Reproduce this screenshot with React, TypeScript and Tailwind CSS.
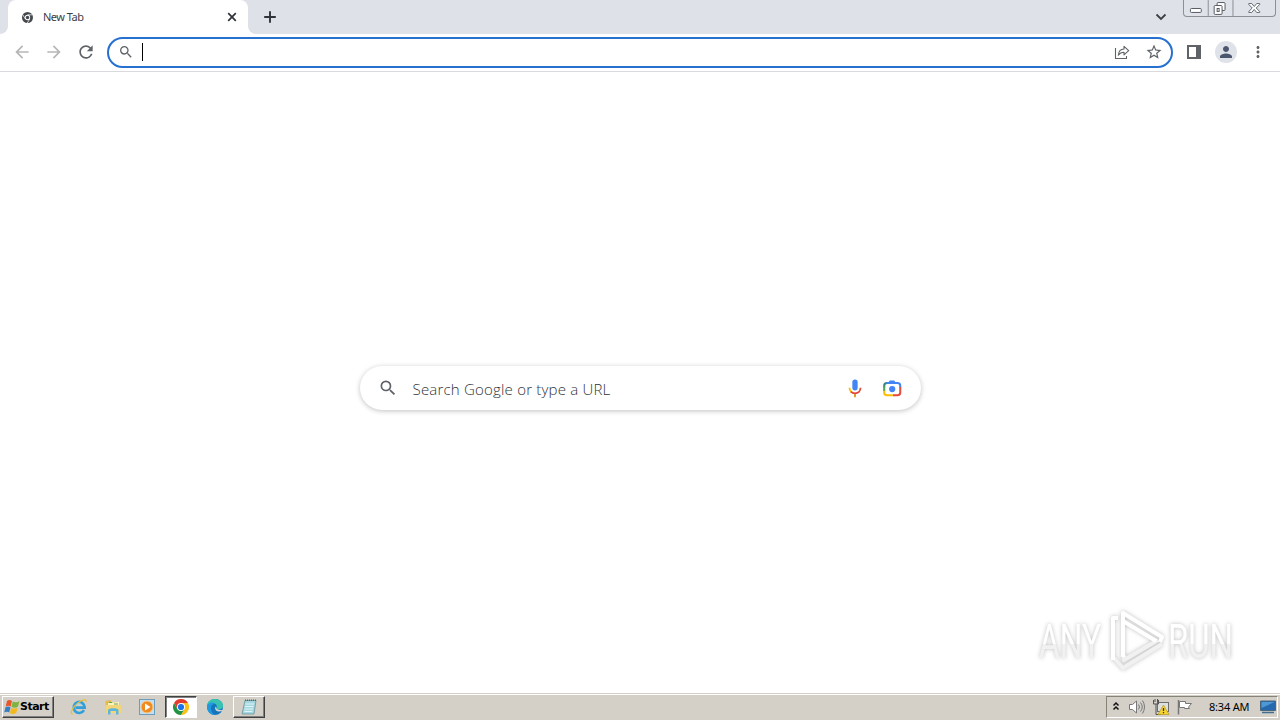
import type { ReactNode } from 'react';
import { MdArrowBack, MdArrowForward, MdMoreVert, MdPerson, MdRefresh, MdSearch, MdStarBorder } from 'react-icons/md';

function ChromeMono() {
    return (
        <svg viewBox="0 0 24 24" className="h-[11px] w-[11px]">
            <circle cx="12" cy="12" r="12" fill="#45494d" />
            <circle cx="12" cy="12" r="5.8" fill="#fff" />
            <circle cx="12" cy="12" r="3.8" fill="#45494d" />
            <path d="M12 6.2h11M7 15L1.5 5.5M17 15l-5.5 9" stroke="#fff" strokeWidth="1.6" />
        </svg>
    );
}

function ChromeLogo() {
    return (
        <svg viewBox="0 0 48 48" className="h-4 w-4">
            <path d="M24 12H44.8A24 24 0 0 1 24 48L34.4 30z" fill="#fbc116" />
            <path d="M13.6 30L3.2 12A24 24 0 0 0 24 48L34.4 30z" fill="#229342" />
            <path d="M3.2 12A24 24 0 0 1 44.8 12H24L13.6 30z" fill="#e33b2e" />
            <circle cx="24" cy="24" r="12" fill="#fff" />
            <circle cx="24" cy="24" r="9.3" fill="#1a73e8" />
        </svg>
    );
}

function CloseIcon() {
    return (
        <svg viewBox="0 0 14 14" className="h-[14px] w-[14px]" fill="none" stroke="#303438" strokeWidth="1.7">
            <path d="M3.200 3.200l7.600 7.600M10.800 3.200l-7.600 7.600" />
        </svg>
    );
}

function PlusIcon() {
    return (
        <svg viewBox="0 0 18 18" className="mt-2 ml-[5px] h-[18px] w-[18px]" fill="none" stroke="#303438" strokeWidth="1.9">
            <path d="M9 3.200v11.600M3.200 9h11.600" />
        </svg>
    );
}

function ShareIcon() {
    return (
        <svg viewBox="0 0 16 16" className="h-4 w-4" fill="none" stroke="#5f6368" strokeWidth="1.1">
            <path d="M1.5 4v10.500h11V12" />
            <path d="M4.3 11.2c.3-3.8 2.3-6 5.7-6.2V2.300L14.700 6.700 10 10.800V8.300c-2.600 0-4.300.8-5.700 2.900z" strokeLinejoin="round" />
        </svg>
    );
}

function MicIcon() {
    return (
        <svg viewBox="0 0 24 24" className="h-[22px] w-[22px]">
            <rect x="9.100" y="2.600" width="5.800" height="12" rx="2.900" fill="#4285f4" />
            <path d="M11 18h2v4h-2z" fill="#dc9b18" />
            <path d="M6 11.800c0 2 .7 3.500 1.900 4.600" fill="none" stroke="#fbbc05" strokeWidth="2" />
            <path d="M7.500 16C8.700 17.300 10.200 17.800 12 17.800c3.500 0 6-2.500 6-6" fill="none" stroke="#e3493a" strokeWidth="2" />
        </svg>
    );
}

function LensIcon() {
    return (
        <svg viewBox="0 0 24 24" className="h-[22px] w-[22px]" fill="none" strokeWidth="2.200">
            <path d="M3.500 11.500V9.500a3 3 0 0 1 3-3" stroke="#34857a" />
            <path d="M6 6.500h12a3 3 0 0 1 3 3v2" stroke="#4285f4" />
            <path d="M8 6l1.500-2.200h5L16 6z" fill="#4285f4" />
            <path d="M21 11v6a3 3 0 0 1-3 3h-5" stroke="#e34b3d" />
            <path d="M3.500 13v4a3 3 0 0 0 3 3H13" stroke="#fbbc05" />
            <path d="M3.500 10v5" stroke="#4ba761" />
            <circle cx="12.200" cy="13.200" r="3.400" fill="#4285f4" />
        </svg>
    );
}

function WindowsFlag() {
    return (
        <svg viewBox="0 0 16 16" className="h-4 w-4">
            <path d="M3 2C5 .5 6.500 1 8 2L6.700 7.500C5 6.300 3.300 6.500 1.700 7.500z" fill="#e8572c" />
            <path d="M8.800 2.500c2 1.200 4.500 1 6.700-.2l-1.600 5.500c-2 1.300-4.500 1.300-6.500 0z" fill="#7fb33f" />
            <path d="M1.500 8.300C3.200 7.200 5 7.300 6.500 8.300L5.200 13.500C3.700 12.500 2 12.500 .2 13.500z" fill="#347fc4" />
            <path d="M7.200 8.700c2 1.200 4.500 1.200 6.500 0l-1.500 5.300c-2 1.300-4.300 1.200-6.300 0z" fill="#f3b91c" />
        </svg>
    );
}

function ExplorerE() {
    return (
        <svg viewBox="0 0 18 18" className="h-[18px] w-[18px]" fill="none">
            <path d="M14 12.200A5.500 5.500 0 1 1 14.700 9.600H5.500" stroke="#319fd9" strokeWidth="2.700" />
            <path d="M2.800 15.800C-.5 16.500 2 9.500 8 5c4-3.200 8.500-4.500 8.200-1.200" stroke="#e8bd3c" strokeWidth="1.300" />
            <path d="M5.800 7.500c1.400-2.200 4.700-2.300 6-.3" stroke="#91d7f5" />
        </svg>
    );
}

function FolderIcon() {
    return (
        <svg viewBox="0 0 18 18" className="h-[18px] w-[18px]">
            <path d="M1.500 3l5-1 1 2 8 1v9h-14z" fill="#e2bb50" />
            <path d="M4 5l11-1v8H4z" fill="#fff3bd" />
            <path d="M1.500 7H17v8H1.500z" fill="#f2d677" />
            <path d="M4 16.500V12c0-2.300 10.500-2.300 10.500 0v4.500H12V13H6.500v3.500z" fill="#5db5de" />
            <path d="M5 4.500h3M10 6h4" stroke="#57a867" />
        </svg>
    );
}

function MediaIcon() {
    return (
        <svg viewBox="0 0 18 18" className="h-[18px] w-[18px]">
            <rect x="1.500" y="1.500" width="15" height="15" fill="#c3dff1" stroke="#6b9dbd" />
            <circle cx="9" cy="9" r="6" fill="#ef8b20" stroke="#fbc788" />
            <path d="M7 5.500l5.500 3.500L7 12.500z" fill="#fff" />
        </svg>
    );
}

function EdgeIcon() {
    return (
        <svg viewBox="0 0 18 18" className="h-[18px] w-[18px]">
            <circle cx="9" cy="9" r="8" fill="#1674bd" />
            <path d="M1 8C1.500 3 5 1 9 1c5 0 8 3.200 8 6.500 0 3-2.300 4-4.500 4-1.700 0-2.800-.6-2-1.700C12 7 8.500 4.500 5 5.500 3 6 1.700 7 1 8z" fill="#38c3b1" />
            <path d="M1 8c1-3.500 6-4.500 8.500-2C6 5.700 4.500 8.500 5 11.500c.4 2.500 2 4.500 4 5.500C4 17 .8 13 1 8z" fill="#2199df" />
            <path d="M10 8.500c-2 1.500-.5 5 3 5 1.300 0 2.400-.4 3.300-1l.7.700c2-2-.5-1-3.500-1.300-2.300-.2-3.500-1.300-3.500-3.400z" fill="#d5d8d5" />
        </svg>
    );
}

function NotepadIcon() {
    return (
        <svg viewBox="0 0 18 18" className="h-[18px] w-[18px]">
            <path d="M5 2.500h11L14 16H2z" fill="#a6d7df" stroke="#68939c" strokeWidth=".8" />
            <path d="M5 2.300h11" stroke="#58656b" strokeWidth="1.600" strokeDasharray="1 1" />
            <path d="M5.500 6h8.500M5 8.500h8.500M4.700 11H13M4.300 13.500h8" stroke="#dff5f7" />
        </svg>
    );
}

function WindowButtons() {
    return (
        <div className="flex h-[17px] w-[93px] rounded-b-[4px] border border-t-0 border-[#8b8f96] bg-[#dfe2e8]">
            <svg viewBox="0 0 92 16" className="h-4 w-[92px]" fill="none" stroke="#555a61">
                <path d="M24.500 0v16M49.500 0v16" stroke="#8b8f96" />
                <rect x="6.500" y="8.500" width="11" height="4" rx="1" fill="#fff" />
                <rect x="33.500" y="2.500" width="8" height="8" rx="1" fill="#fff" />
                <rect x="30.500" y="5.500" width="8" height="9" rx="1" fill="#fff" />
                <rect x="33.500" y="8.500" width="2" height="3" />
                <path d="M65.500 3.500h3l2.500 3 2.500-3h3v1L73 8l3.500 3.500v1h-3L71 9.500l-2.500 3h-3v-1L69 8l-3.500-3.500z" fill="#fff" strokeWidth=".9" />
            </svg>
        </div>
    );
}

function TabStrip() {
    return (
        <div className="flex h-[34px] items-start bg-[#dee1e8]">
            <div className="h-full w-2 bg-white">
                <div className="h-full rounded-br-[8px] bg-[#dee1e8]" />
            </div>
            <div className="flex h-full w-60 items-center rounded-t-[8px] bg-white pr-[9px] pl-3.5">
                <ChromeMono />
                <span className="ml-2.5 flex-1 font-['Noto_Sans','Open_Sans',sans-serif] text-[11px] tracking-[-0.5px] text-[#3c4043]">New Tab</span>
                <CloseIcon />
            </div>
            <div className="h-full w-2 bg-white">
                <div className="h-full rounded-bl-[8px] bg-[#dee1e8]" />
            </div>
            <PlusIcon />
            <svg viewBox="0 0 12 8" className="mt-[13px] mr-4 ml-auto h-2 w-3" fill="none" stroke="#3c4043" strokeWidth="1.800">
                <path d="M1.500 1.500L6 6l4.500-4.500" />
            </svg>
            <WindowButtons />
            <div className="w-1" />
        </div>
    );
}

function Toolbar() {
    return (
        <div className="flex h-[38px] items-center border-b border-[#d8dadd] bg-white pl-3 text-[#5f6368]">
            <MdArrowBack className="mb-px h-5 w-5 text-[#b5b7b9]" />
            <MdArrowForward className="mb-px ml-3 h-5 w-5 text-[#b5b7b9]" />
            <MdRefresh className="mb-px ml-3 h-5 w-5" />
            <div className="ml-[11px] flex h-[31px] w-[1066px] items-center rounded-full border-2 border-[#2670d0] pr-[8px] pb-px pl-[9px]">
                <MdSearch className="h-4 w-4" />
                <div className="ml-2 h-[18px] w-px bg-black" />
                <div className="mr-[15px] ml-auto">
                    <ShareIcon />
                </div>
                <MdStarBorder className="h-[18px] w-[18px]" />
            </div>
            <div className="mb-px ml-3.5 h-[14px] w-[14px] border-2 border-r-[5px] border-[#5f6368]" />
            <div className="mb-px ml-3.5 flex h-[22px] w-[22px] items-center justify-center rounded-full bg-[#dfe2e8]">
                <MdPerson className="h-[18px] w-[18px] text-[#4c566f]" />
            </div>
            <MdMoreVert className="mb-px ml-[12px] h-[18px] w-[18px]" />
        </div>
    );
}

function Watermark() {
    return (
        <svg viewBox="0 0 245 76" className="absolute right-[5px] bottom-[14px] h-[76px] w-[245px] overflow-visible drop-shadow-[0_0_2px_rgba(0,0,0,0.26)]">
            <defs>
                <linearGradient id="letters" x1="0" y1="0" x2="0" y2="1">
                    <stop offset="0.54" stopColor="#fff" />
                    <stop offset="0.54" stopColor="#f1f1f1" />
                </linearGradient>
            </defs>
            <g fill="url(#letters)" className="font-[Roboto,sans-serif] text-[49px] font-normal">
                <text x="9" y="55" textLength="62" lengthAdjust="spacingAndGlyphs">
                    ANY
                </text>
                <text x="138" y="55" textLength="65" lengthAdjust="spacingAndGlyphs">
                    RUN
                </text>
            </g>
            <g fill="none" strokeWidth="4" strokeLinejoin="round">
                <path d="M84 55l9 10 39-24M94 52v5l34-20" stroke="#f1f1f1" />
                <path d="M88 15h-5v42" stroke="#fff" />
                <path d="M93 54V10l39 24-2 5" stroke="#fff" />
                <path d="M93 18l33 20" stroke="#fff" />
            </g>
        </svg>
    );
}

function NewTabPage() {
    return (
        <main className="relative h-[621px] bg-white pt-[294px]">
            <div className="mx-auto flex h-[44px] w-[561px] items-center rounded-full bg-white pr-[18px] pl-[18px] shadow-[0_1px_5px_rgba(32,33,36,0.28)]">
                <MdSearch className="h-5 w-5 text-[#5f6368]" />
                <span className="ml-[15px] flex-1 pt-[3px] font-['Open_Sans','Noto_Sans',sans-serif] text-[15px] font-light tracking-[0.2px] text-[#303338]">
                    Search Google or type a URL
                </span>
                <MicIcon />
                <div className="ml-[15px]">
                    <LensIcon />
                </div>
            </div>
            <Watermark />
        </main>
    );
}

function TaskItem({ children, className = '' }: { children: ReactNode; className?: string }) {
    return <div className={`flex h-[22px] w-8 items-center justify-center ${className}`}>{children}</div>;
}

function Tray() {
    return (
        <div className="ml-auto flex h-[22px] w-[172px] items-center border border-t-[#868378] border-r-white border-b-white border-l-[#868378] pl-[5px]">
            <svg viewBox="0 0 8 12" className="h-3 w-2" fill="none" stroke="#111" strokeWidth="1.500">
                <path d="M1.500 4.500L4 2l2.500 2.500M1.500 8.500L4 6l2.500 2.500" />
            </svg>
            <svg viewBox="0 0 18 18" className="ml-2 h-[18px] w-[18px]" fill="none" stroke="#77777a">
                <path d="M1.500 6.500h3l4-3.500v12l-4-3.500h-3z" fill="#fff" />
                <path d="M10.500 6.500q2 2.500 0 5M12.500 4.500q3.500 4.500 0 9M14.500 2.500q4 6.500 0 13" />
            </svg>
            <svg viewBox="0 0 18 18" className="ml-[6px] h-[18px] w-[18px]" fill="none" stroke="#6d6d6d">
                <rect x="5.500" y="4.500" width="11" height="9" fill="#dedfdf" />
                <path d="M1.500 2v4h5V2M3 1v3M5.500 1v3M4 6v10.500h5" stroke="#525252" />
                <path d="M11.500 7l5.500 9.500H6z" fill="#f7d52f" stroke="#b89821" strokeWidth=".7" />
                <path d="M11.500 10v3M11.500 14v1.300" stroke="#333" strokeWidth="1.300" />
            </svg>
            <svg viewBox="0 0 18 18" className="ml-[6px] h-[18px] w-[18px]" fill="none" stroke="#77777a">
                <path d="M2.500 2v14.500" strokeWidth="1.500" />
                <path d="M3.500 3.500h6v2h6l-3 3.500 1 1.500H8.500v-1h-5z" fill="#fff" />
            </svg>
            <span className="ml-[15px] font-['Noto_Sans','Open_Sans',sans-serif] text-[11px] tracking-[-0.2px] whitespace-nowrap text-black">8:34 AM</span>
            <svg viewBox="0 0 16 14" className="mr-px ml-auto h-[14px] w-4 shrink-0">
                <path d="M.5 1h15v9.500H.5z" fill="#2468ae" stroke="#49667f" />
                <path d="M1.500 2h13L1.500 8z" fill="#4e99d5" />
                <path d="M2 12.500h12" stroke="#426c90" strokeWidth="1.500" />
            </svg>
        </div>
    );
}

function Taskbar() {
    return (
        <footer className="flex h-[27px] items-center border-t border-[#d4d0c8] bg-[#d4d0c8] pr-[2px] pl-[2px] shadow-[inset_0_1px_0_#fff]">
            <div className="mr-[9px] flex h-[22px] w-[52px] items-center border border-t-white border-r-[#404040] border-b-[#404040] border-l-white pl-px shadow-[inset_-1px_-1px_0_#808080]">
                <WindowsFlag />
                <span className="pt-px font-['DejaVu_Sans','Noto_Sans',sans-serif] text-[11px] font-bold tracking-[-0.5px] text-black">Start</span>
            </div>
            <TaskItem>
                <ExplorerE />
            </TaskItem>
            <TaskItem className="ml-0.5">
                <FolderIcon />
            </TaskItem>
            <TaskItem className="ml-0.5">
                <MediaIcon />
            </TaskItem>
            <TaskItem className="ml-0.5 border border-t-[#404040] border-r-white border-b-white border-l-[#404040] bg-white shadow-[inset_1px_1px_0_#808080]">
                <ChromeLogo />
            </TaskItem>
            <TaskItem className="ml-0.5">
                <EdgeIcon />
            </TaskItem>
            <TaskItem className="ml-0.5 border border-t-white border-r-[#404040] border-b-[#404040] border-l-white shadow-[inset_-1px_-1px_0_#808080]">
                <NotepadIcon />
            </TaskItem>
            <Tray />
        </footer>
    );
}

export default function App() {
    return (
        <div className="flex h-[720px] w-[1280px] flex-col overflow-hidden bg-white">
            <TabStrip />
            <Toolbar />
            <NewTabPage />
            <Taskbar />
        </div>
    );
}
